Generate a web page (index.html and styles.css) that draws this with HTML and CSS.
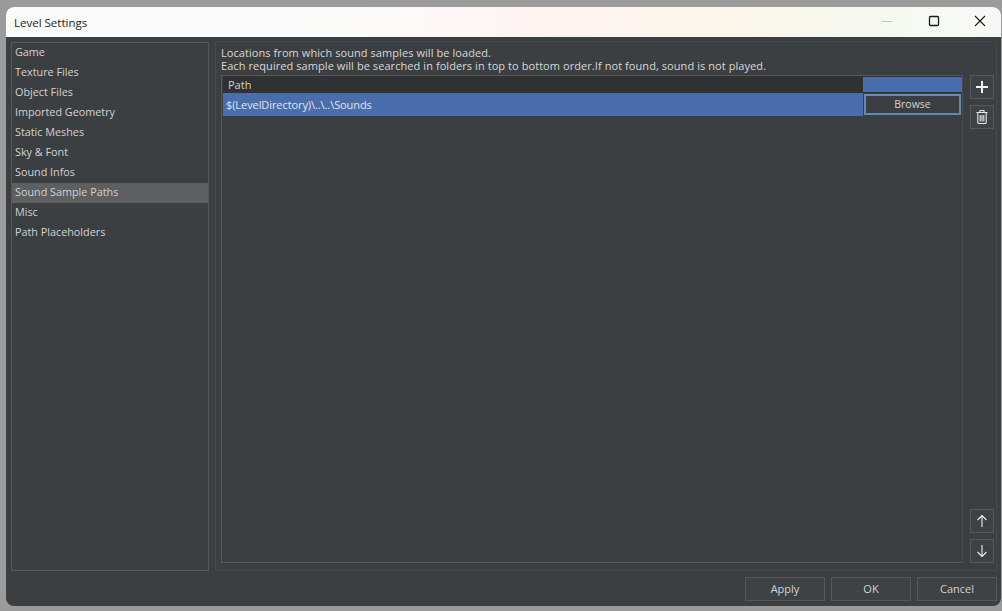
FILE: index.html
```html
<!DOCTYPE html>
<html lang="en">
<head>
<meta charset="utf-8">
<title>Level Settings</title>
<link rel="stylesheet" href="styles.css">
</head>
<body>
<div class="window">
  <header class="titlebar">
    <span class="title">Level Settings</span>
    <div class="controls">
      <svg class="ctl" width="46" height="30" viewBox="0 0 46 30"><path d="M19 14.5h10" stroke="#c4c4c4" stroke-width="1"/></svg>
      <svg class="ctl" width="46" height="30" viewBox="0 0 46 30"><rect x="20.5" y="9.5" width="9" height="9" rx="1" fill="none" stroke="#1a1a1a" stroke-width="1.3"/></svg>
      <svg class="ctl" width="46" height="30" viewBox="0 0 46 30"><path d="M20 9l10 10M30 9l-10 10" stroke="#1a1a1a" stroke-width="1.1" fill="none"/></svg>
    </div>
  </header>
  <div class="content">
    <div class="columns">
      <nav class="list">
        <div class="item">Game</div>
        <div class="item">Texture Files</div>
        <div class="item">Object Files</div>
        <div class="item">Imported Geometry</div>
        <div class="item">Static Meshes</div>
        <div class="item">Sky &amp; Font</div>
        <div class="item">Sound Infos</div>
        <div class="item selected">Sound Sample Paths</div>
        <div class="item">Misc</div>
        <div class="item">Path Placeholders</div>
      </nav>
      <main class="panel">
        <p class="desc">Locations from which sound samples will be loaded.<br>Each required sample will be searched in folders in top to bottom order.If not found, sound is not played.</p>
        <div class="editor">
          <div class="table">
            <div class="thead">
              <div class="th-path">Path</div>
              <div class="th-action"></div>
            </div>
            <div class="row">
              <div class="cell-path">$(LevelDirectory)\..\..\Sounds</div>
              <div class="cell-action"><button class="browse">Browse</button></div>
            </div>
          </div>
          <div class="side">
            <div class="side-group">
              <button class="icon-btn"><svg width="14" height="14" viewBox="0 0 14 14"><path d="M7 1v12M1 7h12" stroke="#f2f2f2" stroke-width="2" fill="none"/></svg></button>
              <button class="icon-btn"><svg width="14" height="16" viewBox="0 0 14 16"><path d="M1.5 3.5h11M5 3.2V1.5h4v1.7M2.8 3.8v9.4q0 1.3 1.3 1.3h5.8q1.3 0 1.3-1.3V3.8M5.2 6v6.5M7 6v6.5M8.8 6v6.5" stroke="#e8e8e8" stroke-width="1.1" fill="none"/></svg></button>
            </div>
            <div class="side-group">
              <button class="icon-btn"><svg width="12" height="14" viewBox="0 0 12 14"><path d="M6 13V1.5M1.5 6L6 1.5 10.5 6" stroke="#eeeeee" stroke-width="1.1" fill="none"/></svg></button>
              <button class="icon-btn"><svg width="12" height="14" viewBox="0 0 12 14"><path d="M6 1v11.5M1.5 8L6 12.5 10.5 8" stroke="#eeeeee" stroke-width="1.1" fill="none"/></svg></button>
            </div>
          </div>
        </div>
      </main>
    </div>
    <footer class="footer">
      <button class="btn">Apply</button>
      <button class="btn">OK</button>
      <button class="btn">Cancel</button>
    </footer>
  </div>
</div>
</body>
</html>
```
FILE: styles.css
```css
* { box-sizing: border-box; }
html, body { height: 100%; }
body {
  margin: 0;
  padding: 7px 1px 5px 6px;
  background: #9b9b9b;
  font-family: "Open Sans", "Liberation Sans", sans-serif;
  font-size: 11px;
  color: #d2d2d2;
  overflow: hidden;
}
.window {
  height: 100%;
  display: flex;
  flex-direction: column;
  border-radius: 8px;
  overflow: hidden;
  background: #3c3f41;
}
.titlebar {
  flex: 0 0 30px;
  display: flex;
  align-items: center;
  justify-content: space-between;
  padding-left: 8px;
  background: linear-gradient(90deg, #fafbfb 0%, #fbfbfa 35%, #fdf3f1 55%, #fbf6ea 72%, #f6f9f1 88%, #f7f8f6 100%);
}
.title { color: #1c1c1c; font-size: 11.5px; }
.controls { display: flex; }
.ctl { display: block; }
.content {
  flex: 1;
  min-height: 0;
  display: flex;
  flex-direction: column;
  padding: 4px 4px 5px 5px;
}
.columns { flex: 1; min-height: 0; display: flex; gap: 6px; }
.list {
  flex: 0 0 198px;
  margin-top: 1px;
  border: 1px solid #55585a;
}
.item {
  height: 20px;
  line-height: 18px;
  padding-left: 3px;
  font-size: 10.8px;
}
.selected { background: #5d5f60; }
.panel {
  flex: 1;
  min-width: 0;
  display: flex;
  flex-direction: column;
  border: 1px solid #46494b;
  padding: 4px 3px 7px 5px;
}
.desc {
  margin: 0 0 3px;
  line-height: 13px;
  letter-spacing: 0.07px;
  color: #d8d8d8;
}
.editor { flex: 1; min-height: 0; display: flex; gap: 7px; }
.table {
  flex: 0 0 742px;
  border: 1px solid #55585a;
  border-right-color: #4a4d4f;
  padding-left: 1px;
}
.thead { display: flex; height: 16px; background: #2f3133; }
.th-path { flex: 1; padding-left: 5px; line-height: 18px; }
.th-action { flex: 0 0 99px; margin-top: 1px; background: #4a6dab; }
.row { display: flex; height: 24px; background: #4a6dab; border-top: 1px solid #2f3133; }
.cell-path { flex: 1; padding-left: 3px; line-height: 23px; color: #e0e5ee; letter-spacing: -0.08px; }
.cell-action { flex: 0 0 99px; padding: 1px; background: #3c3f41; }
.browse {
  display: block;
  width: 100%;
  height: 100%;
  border: 2px solid #6389ae;
  background: #3c3f41;
  color: #d2d2d2;
  font-family: inherit;
  font-size: 10.5px;
  line-height: 16px;
  padding: 0 0 1px;
}
.side {
  flex: 0 0 24px;
  display: flex;
  flex-direction: column;
  justify-content: space-between;
}
.side-group { display: flex; flex-direction: column; gap: 6px; }
.icon-btn {
  width: 24px;
  height: 24px;
  border: 1px solid #55585a;
  background: #3f4244;
  padding: 0;
  display: flex;
  align-items: center;
  justify-content: center;
}
.footer {
  flex: 0 0 30px;
  display: flex;
  justify-content: flex-end;
  align-items: flex-end;
  gap: 6px;
}
.btn {
  width: 80px;
  height: 24px;
  border: 1px solid #55585a;
  background: #3f4244;
  color: #d2d2d2;
  font: inherit;
  padding: 0 0 1px;
}
```
